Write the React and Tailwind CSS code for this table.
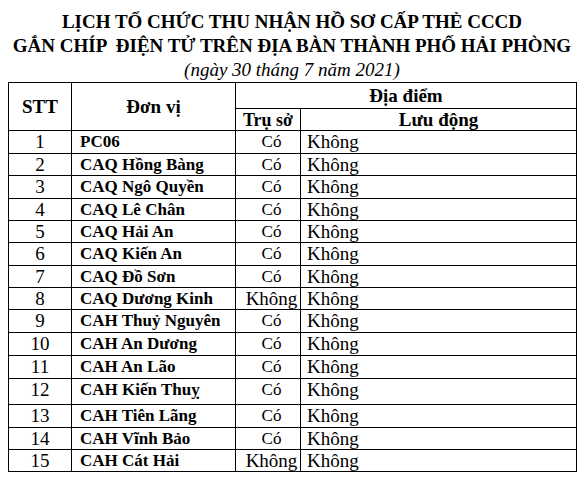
import React from 'react';

const ROWS = [
  { stt: '1', name: 'PC06', base: 'Có', mobile: 'Không', h: 'h-[23px]' },
  { stt: '2', name: 'CAQ Hồng Bàng', base: 'Có', mobile: 'Không', h: 'h-[22px]' },
  { stt: '3', name: 'CAQ Ngô Quyền', base: 'Có', mobile: 'Không', h: 'h-[23px]' },
  { stt: '4', name: 'CAQ Lê Chân', base: 'Có', mobile: 'Không', h: 'h-[22px]' },
  { stt: '5', name: 'CAQ Hải An', base: 'Có', mobile: 'Không', h: 'h-[22px]' },
  { stt: '6', name: 'CAQ Kiến An', base: 'Có', mobile: 'Không', h: 'h-[23px]' },
  { stt: '7', name: 'CAQ Đồ Sơn', base: 'Có', mobile: 'Không', h: 'h-[22px]' },
  { stt: '8', name: 'CAQ Dương Kinh', base: 'Không', mobile: 'Không', h: 'h-[22px]' },
  { stt: '9', name: 'CAH Thuỷ Nguyên', base: 'Có', mobile: 'Không', h: 'h-[23px]' },
  { stt: '10', name: 'CAH An Dương', base: 'Có', mobile: 'Không', h: 'h-[23px]' },
  { stt: '11', name: 'CAH An Lão', base: 'Có', mobile: 'Không', h: 'h-[23px]' },
  { stt: '12', name: 'CAH Kiến Thuỵ', base: 'Có', mobile: 'Không', h: 'h-[26px]' },
  { stt: '13', name: 'CAH Tiên Lãng', base: 'Có', mobile: 'Không', h: 'h-[23px]' },
  { stt: '14', name: 'CAH Vĩnh Bảo', base: 'Có', mobile: 'Không', h: 'h-[22px]' },
  { stt: '15', name: 'CAH Cát Hải', base: 'Không', mobile: 'Không', h: 'h-[22px]' },
];

export default function App() {
  return (
    <div className="w-[584px] h-[478px] bg-white text-black font-['Liberation_Serif','Times_New_Roman',serif] overflow-hidden">
      <div className="pt-[10px] text-center">
        <div className="text-[19px] leading-[24px] font-bold">
          LỊCH TỔ CHỨC THU NHẬN HỒ SƠ CẤP THẺ CCCD
        </div>
        <div className="text-[19px] leading-[24px] font-bold whitespace-pre">
          GẮN CHÍP  ĐIỆN TỬ TRÊN ĐỊA BÀN THÀNH PHỐ HẢI PHÒNG
        </div>
        <div className="text-[19px] leading-[24px] italic">
          (ngày 30 tháng 7 năm 2021)
        </div>
      </div>

      <table className="ml-[8px] w-[568px] table-fixed border-collapse border border-black">
        <colgroup>
          <col className="w-[63px]" />
          <col className="w-[164px]" />
          <col className="w-[65px]" />
          <col className="w-[276px]" />
        </colgroup>
        <thead>
          <tr className="h-[26px]">
            <th
              rowSpan={2}
              className="border border-black p-0 text-center align-middle text-[19px] leading-[21px] font-bold"
            >
              STT
            </th>
            <th
              rowSpan={2}
              className="border border-black p-0 text-center align-middle text-[19px] leading-[21px] font-bold"
            >
              Đơn vị
            </th>
            <th
              colSpan={2}
              className="border border-black p-0 text-center align-middle text-[19px] leading-[21px] font-bold"
            >
              Địa điểm
            </th>
          </tr>
          <tr className="h-[22px]">
            <th className="border border-black p-0 text-center align-middle text-[18px] leading-[20px] font-bold">
              Trụ sở
            </th>
            <th className="border border-black p-0 text-center align-middle text-[19px] leading-[20px] font-bold">
              Lưu động
            </th>
          </tr>
        </thead>
        <tbody>
          {ROWS.map((r) => (
            <tr key={r.stt} className={r.h}>
              <td className="border border-black p-0 text-center align-top text-[19px] leading-[21px]">
                {r.stt}
              </td>
              <td className="border border-black p-0 pl-[8px] align-top text-[17px] leading-[21px] font-bold whitespace-nowrap">
                {r.name}
              </td>
              <td
                className={
                  r.base === 'Có'
                    ? 'border border-black p-0 pl-[7px] text-center align-top text-[17px] leading-[21px] whitespace-nowrap'
                    : 'border border-black p-0 pl-[7px] text-center align-top text-[19px] leading-[21px] whitespace-nowrap'
                }
              >
                {r.base}
              </td>
              <td className="border border-black p-0 pl-[6px] align-top text-[19px] leading-[21px]">
                {r.mobile}
              </td>
            </tr>
          ))}
        </tbody>
      </table>
    </div>
  );
}
